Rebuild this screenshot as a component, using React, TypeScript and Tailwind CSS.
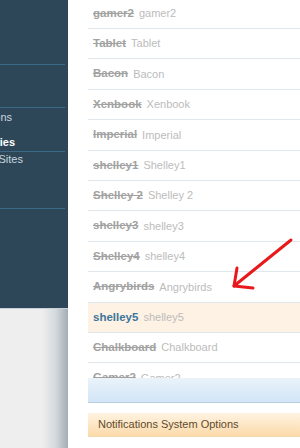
import React from "react";

const rows: { a: string; b: string; hl?: boolean }[] = [
  { a: "gamer2", b: "gamer2" },
  { a: "Tablet", b: "Tablet" },
  { a: "Bacon", b: "Bacon" },
  { a: "Xenbook", b: "Xenbook" },
  { a: "Imperial", b: "Imperial" },
  { a: "shelley1", b: "Shelley1" },
  { a: "Shelley 2", b: "Shelley 2" },
  { a: "shelley3", b: "shelley3" },
  { a: "Shelley4", b: "shelley4" },
  { a: "Angrybirds", b: "Angrybirds" },
  { a: "shelley5", b: "shelley5", hl: true },
  { a: "Chalkboard", b: "Chalkboard" },
  { a: "Gamer2", b: "Gamer2" },
];

export default function App() {
  return (
    <div
      className="relative flex h-[448px] w-[300px] overflow-hidden bg-white"
      style={{ fontFamily: '"Liberation Sans", Arial, sans-serif' }}
    >
      {/* Sidebar */}
      <div className="flex w-[68px] shrink-0 flex-col bg-[#eeeeee]">
        <div className="relative h-[308px] overflow-hidden bg-[#2d4759] text-[11px] text-[#c9d5df]">
          <div className="h-[64px]" />
          <div className="h-px w-[65px] bg-[#3d6988]" />
          <div className="h-[42px]" />
          <div className="h-px w-[65px] bg-[#3d6988]" />
          <div className="mt-[2px] flex h-[14px] w-[12px] justify-end whitespace-nowrap leading-[14px]">
            Notifications
          </div>
          <div className="mt-[11px] flex h-[14px] w-[15px] justify-end whitespace-nowrap font-bold leading-[14px] text-white">
            Categories
          </div>
          <div className="mt-[2px] h-px w-[65px] bg-[#3d6988]" />
          <div className="flex h-[14px] w-[23px] justify-end whitespace-nowrap leading-[14px]">
            Trusted Sites
          </div>
          <div className="mt-[42px] h-px w-[65px] bg-[#3d6988]" />
        </div>
        <div className="h-px bg-[#c9d1d8]" />
        <div className="flex-1 bg-gradient-to-r from-[#eeeeee] from-[62%] via-[#d3d9dd] via-[82%] to-[#a3adb6]" />
      </div>

      {/* Main */}
      <div className="flex flex-1 flex-col bg-white pl-[20px]">
        <div className="mt-[-1.4px] h-[379.4px] overflow-hidden">
          {rows.map((r) => (
            <div
              key={r.a}
              className={`flex h-[30.4px] shrink-0 items-center gap-[5px] border-b border-[#dfe8ee] pl-[5px] ${
                r.hl ? "bg-[#fdf2e4]" : "bg-white"
              }`}
            >
              <span
                className={`text-[11.5px] font-bold ${
                  r.hl ? "text-[#3f759b]" : "text-[#a2a2a2] line-through decoration-1"
                }`}
              >
                {r.a}
              </span>
              <span className="text-[11px] text-[#bcbcbc]">{r.b}</span>
            </div>
          ))}
        </div>
        <div className="h-[25px] border-b border-[#b7cde0] bg-gradient-to-b from-[#eaf3fb] to-[#d2e5f6]" />
        <div className="h-[10px]" />
        <div className="flex h-[24px] items-center border-b border-[#f3d9b0] bg-gradient-to-b from-[#fff3e2] to-[#fbdaa9] pl-[10px] text-[11px] text-[#5f4b2e]">
          Notifications System Options
        </div>
      </div>

      {/* Red arrow annotation */}
      <svg
        className="pointer-events-none absolute left-0 top-0"
        width="300"
        height="448"
        viewBox="0 0 300 448"
      >
        <g stroke="#e8191b" strokeWidth="3" strokeLinecap="round" strokeLinejoin="round" fill="none">
          <path d="M291 240 L234 286" />
          <path d="M237 268 L234 286 L253 288" />
        </g>
      </svg>
    </div>
  );
}
